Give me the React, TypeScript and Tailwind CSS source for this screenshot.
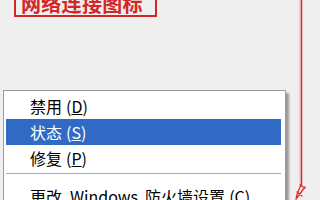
export default function App() {
  const items = [
    { label: "禁用", key: "D", active: false },
    { label: "状态", key: "S", active: true },
    { label: "修复", key: "P", active: false },
  ];

  return (
    <div
      className="relative h-[200px] w-[320px] overflow-hidden bg-[#efefef]"
      style={{ fontFamily: '"Noto Sans CJK SC", "Noto Sans", sans-serif' }}
    >
      {/* callout label, top cut off */}
      <div className="ml-[14px] mt-[-10px] flex h-[27px] w-[143px] items-end border-2 border-[#d42626] pb-[1px] pl-[5px]">
        <span className="text-[20px] font-bold leading-none tracking-[0.3px] text-[#d42626]">
          网络连接图标
        </span>
      </div>

      {/* context menu */}
      <div className="ml-[3px] mt-[73px] w-[283px] border border-[#9a9a9a] bg-white pb-[2px] pl-[2px] pr-[4px] pt-[2px] shadow-[3px_3px_2px_rgba(0,0,0,0.35)]">
        {items.map((it) => (
          <div
            key={it.key}
            className={`flex h-[26px] items-center pl-[24px] text-[16px] leading-none ${
              it.active ? "bg-[#316ac5] text-white" : "text-black"
            }`}
          >
            <span>{it.label}</span>
            <span className="ml-[4px]">
              (<span className="underline">{it.key}</span>)
            </span>
          </div>
        ))}
        <div className="flex h-[12px] items-start pt-[2px]">
          <div className="h-px w-full bg-[#a8a8a8]" />
        </div>
        <div className="flex h-[26px] items-center pl-[24px] text-[16px] leading-none text-black">
          <span>更改</span>
          <span className="ml-[8px]">Windows</span>
          <span className="ml-[7px]">防火墙设置</span>
          <span className="ml-[4px]">
            (<span className="underline">C</span>)
          </span>
        </div>
      </div>

      {/* red pointer line drawn on the screenshot */}
      <svg
        className="absolute left-0 top-0"
        width="320"
        height="200"
        viewBox="0 0 320 200"
        fill="none"
      >
        <line x1="300" y1="0" x2="300" y2="186" stroke="#f4b0b0" strokeWidth="1" />
        <line x1="301.5" y1="0" x2="301.5" y2="186" stroke="#e02a2a" strokeWidth="1.5" />
        <path
          d="M301.5 184 C299 189 297 193 296 199 M296 199 L305 187 M300 185 L305 188 M297 192 L302 196"
          stroke="#e02a2a"
          strokeWidth="1.3"
          strokeLinecap="round"
        />
      </svg>
    </div>
  );
}
